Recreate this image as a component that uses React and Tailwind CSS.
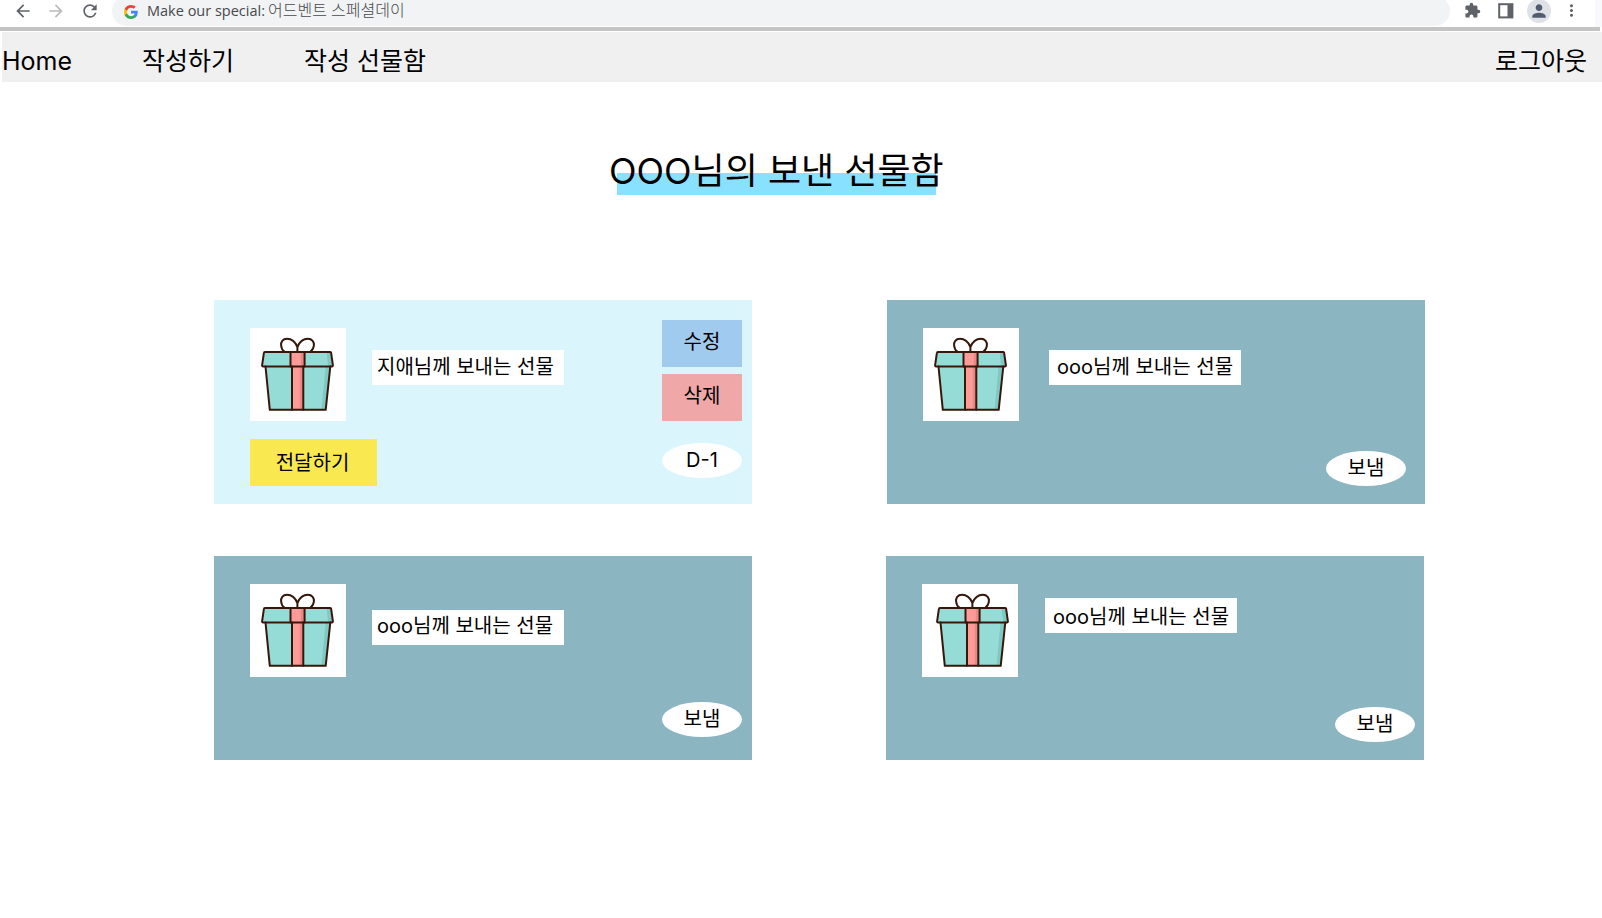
import { MdArrowBack, MdArrowForward, MdRefresh, MdExtension, MdPerson, MdMoreVert } from "react-icons/md";

const GOOGLE = [
  ["#4285F4", "M45.12 24.5c0-1.56-.14-3.06-.4-4.5H24v8.51h11.84c-.51 2.75-2.06 5.08-4.39 6.64v5.52h7.11c4.16-3.83 6.56-9.47 6.56-16.17z"],
  ["#34A853", "M24 46c5.94 0 10.92-1.97 14.56-5.33l-7.11-5.52c-1.97 1.32-4.49 2.1-7.45 2.1-5.73 0-10.58-3.87-12.31-9.07H4.34v5.7C7.96 41.07 15.4 46 24 46z"],
  ["#FBBC05", "M11.69 28.18C11.25 26.86 11 25.45 11 24s.25-2.86.69-4.18v-5.7H4.34C2.85 17.09 2 20.45 2 24s.85 6.91 2.34 9.88l7.35-5.7z"],
  ["#EA4335", "M24 10.75c3.23 0 6.13 1.11 8.41 3.29l6.31-6.31C34.91 4.18 29.93 2 24 2 15.4 2 7.96 6.93 4.34 14.12l7.35 5.7c1.73-5.2 6.58-9.07 12.31-9.07z"],
];

function BrowserBar() {
  return (
    <div className="flex h-[27px] items-start overflow-hidden bg-white text-[#5f6368]">
      <div className="flex pt-px pl-[13px]">
        <MdArrowBack size={20} />
        <MdArrowForward size={20} className="ml-[13px] text-[#b9bbbd]" />
        <MdRefresh size={20} className="ml-[14px]" />
      </div>
      <div className="-mt-1 ml-[12px] flex h-[30px] w-[1338px] items-center rounded-full bg-[#f1f3f4] pl-3">
        <svg width="14" height="14" viewBox="2 2 44 44" className="mt-px">
          {GOOGLE.map(([fill, d]) => (
            <path key={fill} fill={fill} d={d} />
          ))}
        </svg>
        <span className="-mt-0.5 ml-[9px] flex items-baseline whitespace-pre font-['Open_Sans','Noto_Sans_CJK_KR',sans-serif] leading-5 text-[#46494d]">
          <span className="w-[121px] text-[14.5px]">Make our special:</span>
          <span className="text-[16px] font-light">어드벤트 스페셜데이</span>
        </span>
      </div>
      <div className="ml-[14px] flex items-start">
        <MdExtension size={17} className="mt-[2px]" />
        <svg width="16" height="16" viewBox="0 0 16 16" className="mt-[3px] ml-[17px]">
          <rect x="1.2" y="1.2" width="13.2" height="13.2" fill="none" stroke="currentColor" strokeWidth="2" />
          <rect x="9.5" y="1" width="5" height="13.5" fill="currentColor" />
        </svg>
        <span className="-mt-px ml-[13px] flex size-6 items-center justify-center rounded-full bg-[#dee1e6] text-[#525c70]">
          <MdPerson size={20} />
        </span>
        <MdMoreVert size={19} className="mt-px ml-[11px]" />
      </div>
      <div className="ml-auto h-full w-[7px] bg-[#f8f9fa]" />
    </div>
  );
}

function Nav() {
  return (
    <nav className="ml-0.5 flex h-[50px] bg-[#f0f0f0] pt-3.5 pr-[15px] text-[25px] leading-[30px] whitespace-pre">
      <a className="w-[140px]">Home</a>
      <a className="w-[162px]">작성하기</a>
      <a>작성 선물함</a>
      <a className="ml-auto">로그아웃</a>
    </nav>
  );
}

function Gift({ className }) {
  return (
    <div className="h-[93px] w-24 bg-white">
      <svg width="96" height="93" viewBox="0 0 96 93" className={className}>
        <path d="M15.5 38.5H80.3L75.7 81.8H19.8Z" fill="#95dcd7" />
        <path d="M75.5 39H80.3L75.7 81.8H71.5Z" fill="#80c8c4" />
        <path d="M14.4 24H80.8L82.9 38.3H12.1Z" fill="#95dcd7" />
        <path d="M76.5 24H80.8L82.9 38.3H78.2Z" fill="#80c8c4" />
        <path d="M42 38.5H53.3V81.8H42ZM40.5 24H54.6V38.5H40.5Z" fill="#fd9b98" />
        <path d="M49.8 38.5H53.3V81.8H49.8ZM50.8 24H54.6V38.5H50.8Z" fill="#e98784" />
        <g fill="none" stroke="#36180b" strokeWidth="2" strokeLinejoin="round" strokeLinecap="round">
          <path d="M15.5 38.5L19.8 81.8H75.7L80.3 38.5" />
          <path d="M14.9 24H80.4Q81 24 81.1 24.7L82.9 37.4Q83 38.4 82 38.4H13Q12 38.4 12.1 37.4L13.9 24.9Q14 24 14.9 24Z" />
          <path d="M40.5 24V38.4M54.6 24V38.4M42 38.4V81.8M53.3 38.4V81.8" />
          <path d="M47.4 24V19C45.5 14.5 41.5 10.8 37 10.8C32.5 10.8 30.8 14 31.1 17.2C31.3 20 32.8 22.5 34.3 23.6M47.4 19C49.3 14.5 53.3 10.8 57.8 10.8C62.3 10.8 64.2 14 63.9 17.2C63.7 20 62 22.5 60.5 23.6" />
        </g>
      </svg>
    </div>
  );
}

function Badge({ children, className = "" }) {
  return (
    <span className={`flex h-[35px] w-20 justify-center rounded-[50%] bg-white pt-0.5 leading-[30px] ${className}`}>
      {children}
    </span>
  );
}

function Card({ tone, label, labelClass, giftClass, action, children, sideClass }) {
  return (
    <article className={`flex h-[204px] w-[538px] pl-9 ${tone}`}>
      <div className="w-24 shrink-0 pt-7">
        <Gift className={giftClass} />
        {action}
      </div>
      <p className={`h-[35px] w-48 bg-white leading-[30px] whitespace-pre ${labelClass}`}>{label}</p>
      <div className={`ml-auto flex flex-col ${sideClass}`}>{children}</div>
    </article>
  );
}

export default function App() {
  return (
    <div className="min-h-[918px] w-[1602px] overflow-hidden bg-white font-[Inter,'Noto_Sans_CJK_KR',sans-serif] text-black">
      <BrowserBar />
      <div className="mb-px h-1 w-[1600px] bg-[#c4c4c4]" />
      <Nav />
      <header className="mt-[67px] ml-[609px] w-[336px]">
        <h1 className="bg-[linear-gradient(#87e1ff,#87e1ff)] bg-[length:319px_22px] bg-[position:8px_24px] bg-no-repeat pb-0.5 text-[36px] leading-[44px] whitespace-pre">
          OOO님의 보낸 선물함
        </h1>
      </header>
      <main className="mt-[105px] ml-[214px] flex flex-col gap-[52px] text-[20px]">
        <div className="flex gap-[135px]">
          <Card
            tone="bg-[#daf5fc]"
            label="지애님께 보내는 선물"
            labelClass="mt-[50px] ml-[26px] pt-0.5 pl-[5px]"
            sideClass="mt-5 mr-[10px]"
            action={
              <button className="mt-[18px] h-[47px] w-[127px] bg-[#f9e850] pt-px pr-0.5 leading-[30px]">전달하기</button>
            }
          >
            <button className="h-[47px] w-20 bg-[#a0caee] pb-1 leading-[30px]">수정</button>
            <button className="mt-[7px] h-[47px] w-20 bg-[#f0a7a7] pb-1 leading-[30px]">삭제</button>
            <Badge className="mt-[22px]">D-1</Badge>
          </Card>
          <Card
            tone="bg-[#8bb5c1]"
            label="ooo님께 보내는 선물"
            labelClass="mt-[50px] ml-[30px] pt-0.5 pl-[8px]"
            sideClass="mt-[151px] mr-[19px]"
          >
            <Badge>보냄</Badge>
          </Card>
        </div>
        <div className="flex gap-[134px]">
          <Card
            tone="bg-[#8bb5c1]"
            label="ooo님께 보내는 선물"
            labelClass="mt-[54px] ml-[26px] pt-px pl-[5px]"
            sideClass="mt-[146px] mr-[10px]"
          >
            <Badge>보냄</Badge>
          </Card>
          <Card
            tone="bg-[#8bb5c1]"
            label="ooo님께 보내는 선물"
            labelClass="mt-[42px] ml-[27px] pt-1 pl-[8px]"
            giftClass="translate-x-[3px]"
            sideClass="mt-[151px] mr-[9px]"
          >
            <Badge>보냄</Badge>
          </Card>
        </div>
      </main>
    </div>
  );
}
